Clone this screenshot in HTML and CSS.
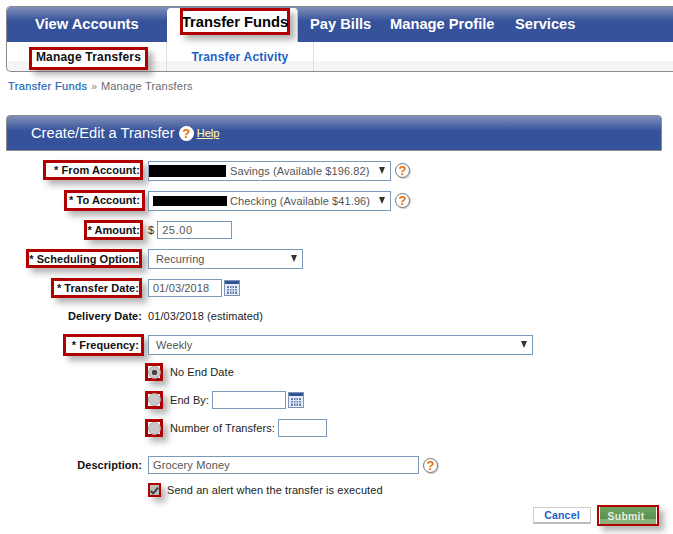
FILE: index.html
```html
<!DOCTYPE html>
<html lang="en">
<head>
<meta charset="utf-8">
<title>Transfer Funds</title>
<link rel="stylesheet" href="styles.css">
</head>
<body>
<nav class="nav">
  <div class="tabs">
    <a class="tab tab-view">View Accounts</a>
    <a class="tab tab-active"><span class="mark mark-tab">Transfer Funds</span></a>
    <a class="tab tab-pay">Pay Bills</a>
    <a class="tab tab-profile">Manage Profile</a>
    <a class="tab tab-services">Services</a>
  </div>
  <div class="subtabs">
    <a class="sub sub-manage"><span class="mark mark-sub">Manage Transfers</span></a>
    <a class="sub sub-activity">Transfer Activity</a>
  </div>
</nav>
<p class="crumbs"><a>Transfer Funds</a> <span class="sep">»</span> <span class="crumb-here">Manage Transfers</span></p>
<section class="panel">
  <h1 class="panel-title">Create/Edit a Transfer <span class="help help-head">?</span> <a class="help-link">Help</a></h1>
</section>
<form class="form">
  <div class="row r30">
    <label class="lab"><span class="mark mark-from">* From Account:</span></label>
    <div class="val">
      <div class="select sel-from"><span class="redact redact-from"></span><span class="sel-text">Savings (Available $196.82)</span><span class="arrow"></span></div>
      <span class="help help-side">?</span>
    </div>
  </div>
  <div class="row r30">
    <label class="lab"><span class="mark mark-to">* To Account:</span></label>
    <div class="val">
      <div class="select sel-from"><span class="redact redact-to"></span><span class="sel-text">Checking (Available $41.96)</span><span class="arrow"></span></div>
      <span class="help help-side">?</span>
    </div>
  </div>
  <div class="row r29">
    <label class="lab"><span class="mark mark-amount">* Amount:</span></label>
    <div class="val"><span class="dollar">$</span><div class="input in-amount">25.00</div></div>
  </div>
  <div class="row r29">
    <label class="lab"><span class="mark mark-sched">* Scheduling Option:</span></label>
    <div class="val"><div class="select sel-sched"><span class="sel-plain">Recurring</span><span class="arrow"></span></div></div>
  </div>
  <div class="row r29">
    <label class="lab"><span class="mark mark-date">* Transfer Date:</span></label>
    <div class="val">
      <div class="input in-date">01/03/2018</div>
      <svg class="cal" viewBox="0 0 16 16" aria-hidden="true"><rect x="0.5" y="0.5" width="15" height="15" fill="#e6ecf5" stroke="#7f93b5"/><rect x="1" y="1" width="14" height="3" fill="#2f5597"/><path d="M3 6h10v8H3z" fill="#5f7fb8"/><path d="M5.5 6v8M8 6v8M10.5 6v8M3 8.5h10M3 11h10" stroke="#e6ecf5" stroke-width="1"/></svg>
    </div>
  </div>
  <div class="row r28">
    <label class="lab lab-plain">Delivery Date:</label>
    <div class="val"><span class="plain">01/03/2018 (estimated)</span></div>
  </div>
  <div class="row r29">
    <label class="lab"><span class="mark mark-freq">* Frequency:</span></label>
    <div class="val"><div class="select sel-freq"><span class="sel-plain">Weekly</span><span class="arrow"></span></div></div>
  </div>
  <div class="row r26">
    <span></span>
    <div class="val"><span class="mark mark-radio"><span class="radio radio-on"></span></span><span class="plain opt">No End Date</span></div>
  </div>
  <div class="row r29">
    <span></span>
    <div class="val"><span class="mark mark-radio"><span class="radio"></span></span><span class="plain opt">End By:</span><div class="input in-end"></div>
      <svg class="cal" viewBox="0 0 16 16" aria-hidden="true"><rect x="0.5" y="0.5" width="15" height="15" fill="#e6ecf5" stroke="#7f93b5"/><rect x="1" y="1" width="14" height="3" fill="#2f5597"/><path d="M3 6h10v8H3z" fill="#5f7fb8"/><path d="M5.5 6v8M8 6v8M10.5 6v8M3 8.5h10M3 11h10" stroke="#e6ecf5" stroke-width="1"/></svg>
    </div>
  </div>
  <div class="row r28">
    <span></span>
    <div class="val"><span class="mark mark-radio"><span class="radio"></span></span><span class="plain opt">Number of Transfers:</span><div class="input in-num"></div></div>
  </div>
  <div class="row r26 desc">
    <label class="lab lab-plain">Description:</label>
    <div class="val"><div class="input in-desc">Grocery Money</div><span class="help help-side">?</span></div>
  </div>
  <div class="row r24">
    <span></span>
    <div class="val"><span class="mark mark-check"><svg class="tick" viewBox="0 0 10 10" aria-hidden="true"><path d="M1 5.5 3.6 8.2 9 1.8" fill="none" stroke="#3c3c3c" stroke-width="2.2"/></svg></span><span class="plain opt-check">Send an alert when the transfer is executed</span></div>
  </div>
  <div class="actions">
    <a class="btn btn-cancel">Cancel</a>
    <a class="btn-wrap"><span class="btn btn-submit">Submit</span></a>
  </div>
</form>
</body>
</html>
```
FILE: styles.css
```css
* { box-sizing: border-box; }
html, body { margin: 0; padding: 0; }
body {
  width: 673px;
  height: 534px;
  overflow: hidden;
  background: #fff;
  font-family: "Liberation Sans", Arial, sans-serif;
  font-size: 11px;
  color: #222;
}
.mark {
  display: inline-flex;
  align-items: center;
  border: 3px solid #b10000;
  box-shadow: 5px 5px 6px rgba(90, 90, 90, 0.45);
  background: #fff;
  white-space: nowrap;
}

/* nav */
.nav {
  margin: 6px 0 0 6px;
  border: 1px solid #8a8a8a;
  border-right: 0;
  border-radius: 5px 0 0 5px;
  height: 66px;
  background: linear-gradient(#fff 0, #fff 19px, #f5f5f5 19px);
  background-position: 0 35px;
  background-repeat: no-repeat;
}
.tabs {
  display: flex;
  height: 35px;
  background: linear-gradient(#8090b9 0, #35529b 14px);
  border-radius: 4px 0 0 0;
}
.tab {
  display: flex;
  align-items: center;
  color: #fff;
  font-size: 14.7px;
  font-weight: bold;
  padding-bottom: 1px;
  white-space: nowrap;
}
.tab-view { width: 160px; padding-left: 28px; }
.tab-active {
  width: 131px;
  margin-top: 1px;
  height: 34px;
  background: #fff;
  border-radius: 4px 4px 0 0;
  border-right: 1px solid #c8c8c8;
  padding-left: 13px;
  align-items: flex-start;
  color: #000;
}
.mark-tab { height: 27px; width: 110px; justify-content: center; }
.tab-pay { margin-left: 12px; width: 80px; }
.tab-profile { width: 125px; }
.tab-services { width: 70px; }
.subtabs {
  display: flex;
  height: 29px;
}
.sub {
  display: flex;
  align-items: flex-start;
  font-size: 12px;
  font-weight: bold;
  white-space: nowrap;
}
.sub-manage {
  width: 160px;
  padding: 5px 0 0 22px;
  border-right: 1px solid #ddd;
  color: #111;
}
.mark-sub { height: 23px; width: 119px; justify-content: center; letter-spacing: .2px; padding-bottom: 4px; }
.sub-activity {
  width: 147px;
  justify-content: center;
  color: #1a5fc8;
  border-right: 1px solid #ddd;
  padding-top: 8px;
  letter-spacing: .2px;
}

/* breadcrumb */
.crumbs {
  margin: 7px 0 0 8px;
  height: 14px;
  line-height: 14px;
  font-size: 11px;
  letter-spacing: .38px;
  color: #6a6a70;
}
.crumbs a { color: #1a68b8; -webkit-text-stroke: .2px #1a68b8; }
.crumb-here { letter-spacing: .2px; }
.sep { color: #888; }

/* panel */
.panel {
  margin: 22px 11px 0 6px;
  height: 36px;
  border: 1px solid #8a8a8a;
  border-radius: 4px 4px 0 0;
  background: linear-gradient(#8090b9 0, #35529b 15px);
}
.panel-title {
  display: flex;
  align-items: center;
  margin: 0;
  height: 34px;
  padding: 0 0 0 24px;
  font-size: 14.7px;
  font-weight: normal;
  color: #fff;
}
.help {
  display: inline-flex;
  align-items: center;
  justify-content: center;
  width: 15px;
  height: 15px;
  border-radius: 50%;
  background: #fff;
  color: #e8710a;
  font-size: 13px;
  font-weight: bold;
  line-height: 1;
  flex: none;
}
.help-head { margin-left: 4px; }
.help-link {
  margin-left: 3px;
  color: #fff3a0;
  font-size: 11px;
  font-weight: normal;
  -webkit-text-stroke: .2px #fff3a0;
  text-decoration: underline;
}
.help-side {
  margin-left: 4px;
  border: 1px solid #777;
  box-shadow: 1px 1px 1px rgba(90, 90, 90, .3);
}

/* form */
.form { padding-top: 4px; }
.row {
  display: grid;
  grid-template-columns: 142px 1fr;
  column-gap: 6px;
  align-items: center;
}
.r24 { height: 24px; }
.r26 { height: 26px; }
.r28 { height: 28px; }
.r29 { height: 29px; }
.r30 { height: 30px; }
.desc { margin-top: 10px; }
.lab {
  display: flex;
  justify-content: flex-end;
  align-items: center;
  font-weight: bold;
  color: #111;
  letter-spacing: .05px;
  white-space: nowrap;
}
.mark-from { width: 100px; height: 20px; justify-content: flex-end; margin-right: -1px; }
.mark-to { width: 81px; height: 21px; justify-content: flex-end; margin-right: -3px; padding-right: 2px; }
.mark-amount { width: 59px; height: 20px; justify-content: flex-end; margin-right: -1px; }
.mark-sched { width: 116px; height: 19px; justify-content: flex-end; }
.mark-date { width: 91px; height: 20px; justify-content: flex-end; }
.mark-freq { width: 81px; height: 22px; justify-content: flex-end; margin-right: -2px; padding-right: 2px; }
.val { display: flex; align-items: center; min-width: 0; }
.select {
  position: relative;
  display: flex;
  align-items: center;
  height: 20px;
  margin-top: 1px;
  border: 1px solid #7a9abb;
  background: #fff;
  color: #555;
  letter-spacing: .1px;
}
.sel-from { width: 243px; margin-top: 2px; }
.sel-sched { width: 155px; }
.sel-freq { width: 385px; }
.sel-plain { padding-left: 7px; }
.redact { display: block; background: #000; height: 12px; }
.redact-from { width: 77px; }
.redact-to { width: 74px; margin-left: 4px; height: 10px; }
.sel-text { margin-left: 4px; white-space: nowrap; }
.redact-to + .sel-text { margin-left: 3px; }
.arrow {
  position: absolute;
  right: 5px;
  top: 5px;
  width: 0;
  height: 0;
  border-left: 3.5px solid transparent;
  border-right: 3.5px solid transparent;
  border-top: 7px solid #333;
}
.dollar { margin-right: 3px; color: #333; }
.input {
  display: flex;
  align-items: center;
  height: 18px;
  padding-left: 4px;
  border: 1px solid #7a9abb;
  background: #fff;
  color: #555;
  letter-spacing: .12px;
}
.in-amount { width: 75px; letter-spacing: .6px; }
.in-date { width: 74px; }
.in-end { width: 74px; margin-left: 3px; }
.in-num { width: 49px; margin-left: 3px; }
.in-desc { width: 271px; }
.cal { width: 16px; height: 16px; margin-left: 2px; }
.plain { color: #222; letter-spacing: .08px; }
.mark-radio {
  width: 18px;
  height: 18px;
  justify-content: center;
  margin-left: -3px;
  flex: none;
}
.radio {
  display: block;
  width: 13px;
  height: 13px;
  border-radius: 50%;
  border: 1px solid #aaa;
  background: #c8c8c8;
  flex: none;
}
.radio-on { background: radial-gradient(circle, #444 0 2.5px, #c8c8c8 3px); }
.opt { margin-left: 7px; }
.mark-check {
  width: 13px;
  height: 14px;
  justify-content: center;
  border-width: 2px;
  background: #bbb;
  flex: none;
}
.tick { width: 9px; height: 9px; }
.opt-check { margin-left: 6px; }

/* actions */
.actions {
  display: flex;
  justify-content: flex-end;
  align-items: center;
  gap: 6px;
  margin-top: 3px;
  padding-right: 14px;
}
.btn {
  display: flex;
  align-items: center;
  justify-content: center;
  height: 17px;
  font-weight: bold;
  font-size: 10.5px;
  letter-spacing: .2px;
}
.btn-cancel {
  width: 58px;
  border: 1px solid #ccc;
  border-bottom: 2px solid #bbb;
  color: #1a5fc8;
  background: #fff;
}
.btn-wrap {
  display: block;
  padding: 0 1px;
  border: 2px solid #b10000;
  box-shadow: 5px 5px 6px rgba(90, 90, 90, .45);
  background: #fff;
}
.btn-submit {
  width: 56px;
  padding-right: 4px;
  color: #e6efe0;
  background: linear-gradient(#6da35f 0, #5c9052 70%, #8ab07e 70%);
}
```
